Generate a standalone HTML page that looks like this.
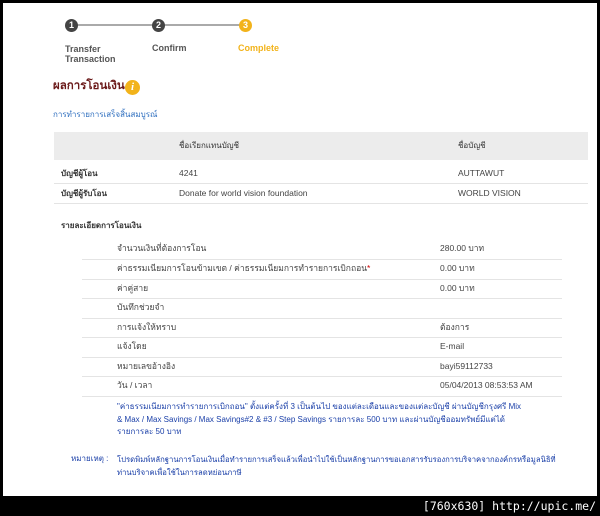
<!DOCTYPE html><html><head><meta charset="utf-8"><style>
*{margin:0;padding:0;box-sizing:border-box}
body{width:600px;height:516px;background:#000;position:relative;overflow:hidden;font-family:"Liberation Sans","Noto Sans CJK SC",sans-serif;font-size:8.5px;color:#444}
#w{position:absolute;left:3px;top:3px;width:594px;height:493px;background:#fff}
.a{position:absolute;white-space:nowrap;line-height:11px}
.c{position:absolute;width:13px;height:13px;border-radius:50%;color:#fff;font-weight:bold;font-size:9px;text-align:center;line-height:13px;top:16px}
.hl{position:absolute;height:1px;background:#e4e4e4}
</style></head><body><div id="w">
<div class="hl" style="left:69px;top:21px;width:174px;height:2px;background:#aaa"></div>
<div class="c" style="left:62px;background:#444">1</div>
<div class="c" style="left:149px;background:#444">2</div>
<div class="c" style="left:236px;background:#f2b31b">3</div>
<div class="a" style="left:62px;top:41px;font-weight:bold;font-size:9px;color:#555;line-height:10px">Transfer<br>Transaction</div>
<div class="a" style="left:149px;top:40px;font-weight:bold;font-size:9px;color:#555">Confirm</div>
<div class="a" style="left:235px;top:40px;font-weight:bold;font-size:9px;color:#f2b31b">Complete</div>
<div class="a" style="left:50px;top:76px;font-weight:bold;font-size:11.5px;line-height:14px;color:#6b1a1a">ผลการโอนเงิน</div>
<div class="a" style="left:122px;top:77px;width:15px;height:15px;border-radius:50%;background:#f2b31b;color:#fff;font-weight:bold;font-style:italic;font-size:11px;text-align:center;line-height:15px;font-family:'Liberation Serif',serif">i</div>
<div class="a" style="left:50px;top:106px;color:#2f6fbf;font-size:8px">การทำรายการเสร็จสิ้นสมบูรณ์</div>
<div class="a" style="left:51px;top:129px;width:534px;height:28px;background:#ececec"></div>
<div class="a" style="left:176px;top:137px;color:#333;font-size:8px">ชื่อเรียกแทนบัญชี</div>
<div class="a" style="left:455px;top:137px;color:#333;font-size:8px">ชื่อบัญชี</div>
<div class="a" style="left:58px;top:165px;font-weight:bold;color:#333;font-size:8px">บัญชีผู้โอน</div>
<div class="a" style="left:176px;top:165px">4241</div>
<div class="a" style="left:455px;top:165px">AUTTAWUT</div>
<div class="hl" style="left:51px;top:180px;width:534px"></div>
<div class="a" style="left:58px;top:185px;font-weight:bold;color:#333;font-size:8px">บัญชีผู้รับโอน</div>
<div class="a" style="left:176px;top:185px">Donate for world vision foundation</div>
<div class="a" style="left:455px;top:185px">WORLD VISION</div>
<div class="hl" style="left:51px;top:200px;width:534px"></div>
<div class="a" style="left:58px;top:217px;font-weight:bold;color:#333;font-size:8px">รายละเอียดการโอนเงิน</div>

<div class="a" style="left:114px;top:240px">จำนวนเงินที่ต้องการโอน</div><div class="a" style="left:437px;top:240px">280.00 บาท</div><div class="hl" style="left:79px;top:256px;width:480px"></div>
<div class="a" style="left:114px;top:260px">ค่าธรรมเนียมการโอนข้ามเขต / ค่าธรรมเนียมการทำรายการเบิกถอน<span style="color:#c00">*</span></div><div class="a" style="left:437px;top:260px">0.00 บาท</div><div class="hl" style="left:79px;top:276px;width:480px"></div>
<div class="a" style="left:114px;top:280px">ค่าคู่สาย</div><div class="a" style="left:437px;top:280px">0.00 บาท</div><div class="hl" style="left:79px;top:295px;width:480px"></div>
<div class="a" style="left:114px;top:299px">บันทึกช่วยจำ</div><div class="hl" style="left:79px;top:315px;width:480px"></div>
<div class="a" style="left:114px;top:319px">การแจ้งให้ทราบ</div><div class="a" style="left:437px;top:319px">ต้องการ</div><div class="hl" style="left:79px;top:334px;width:480px"></div>
<div class="a" style="left:114px;top:338px">แจ้งโดย</div><div class="a" style="left:437px;top:338px">E-mail</div><div class="hl" style="left:79px;top:354px;width:480px"></div>
<div class="a" style="left:114px;top:358px">หมายเลขอ้างอิง</div><div class="a" style="left:437px;top:358px">bayi59112733</div><div class="hl" style="left:79px;top:373px;width:480px"></div>
<div class="a" style="left:114px;top:377px">วัน / เวลา</div><div class="a" style="left:437px;top:377px">05/04/2013 08:53:53 AM</div><div class="hl" style="left:79px;top:393px;width:480px"></div>

<div class="a" style="left:114px;top:398px;color:#1a3fa8;line-height:12.5px;font-size:8px">"ค่าธรรมเนียมการทำรายการเบิกถอน" ตั้งแต่ครั้งที่ 3 เป็นต้นไป ของแต่ละเดือนและของแต่ละบัญชี ผ่านบัญชีกรุงศรี Mix<br>&amp; Max / Max Savings / Max Savings#2 &amp; #3 / Step Savings รายการละ 500 บาท และผ่านบัญชีออมทรัพย์มีแต่ได้<br>รายการละ 50 บาท</div>
<div class="a" style="left:68px;top:450px;color:#1a3fa8;font-size:8px">หมายเหตุ :</div>
<div class="a" style="left:114px;top:450px;color:#1a3fa8;line-height:13px;font-size:7.7px">โปรดพิมพ์หลักฐานการโอนเงินเมื่อทำรายการเสร็จแล้วเพื่อนำไปใช้เป็นหลักฐานการขอเอกสารรับรองการบริจาคจากองค์กรหรือมูลนิธิที่<br>ท่านบริจาคเพื่อใช้ในการลดหย่อนภาษี</div>
</div>
<div class="a" style="right:4px;top:500px;color:#fff;font-size:11.5px;line-height:13px;font-family:'DejaVu Sans Mono',monospace">[760x630] http://upic.me/</div>
</body></html>
